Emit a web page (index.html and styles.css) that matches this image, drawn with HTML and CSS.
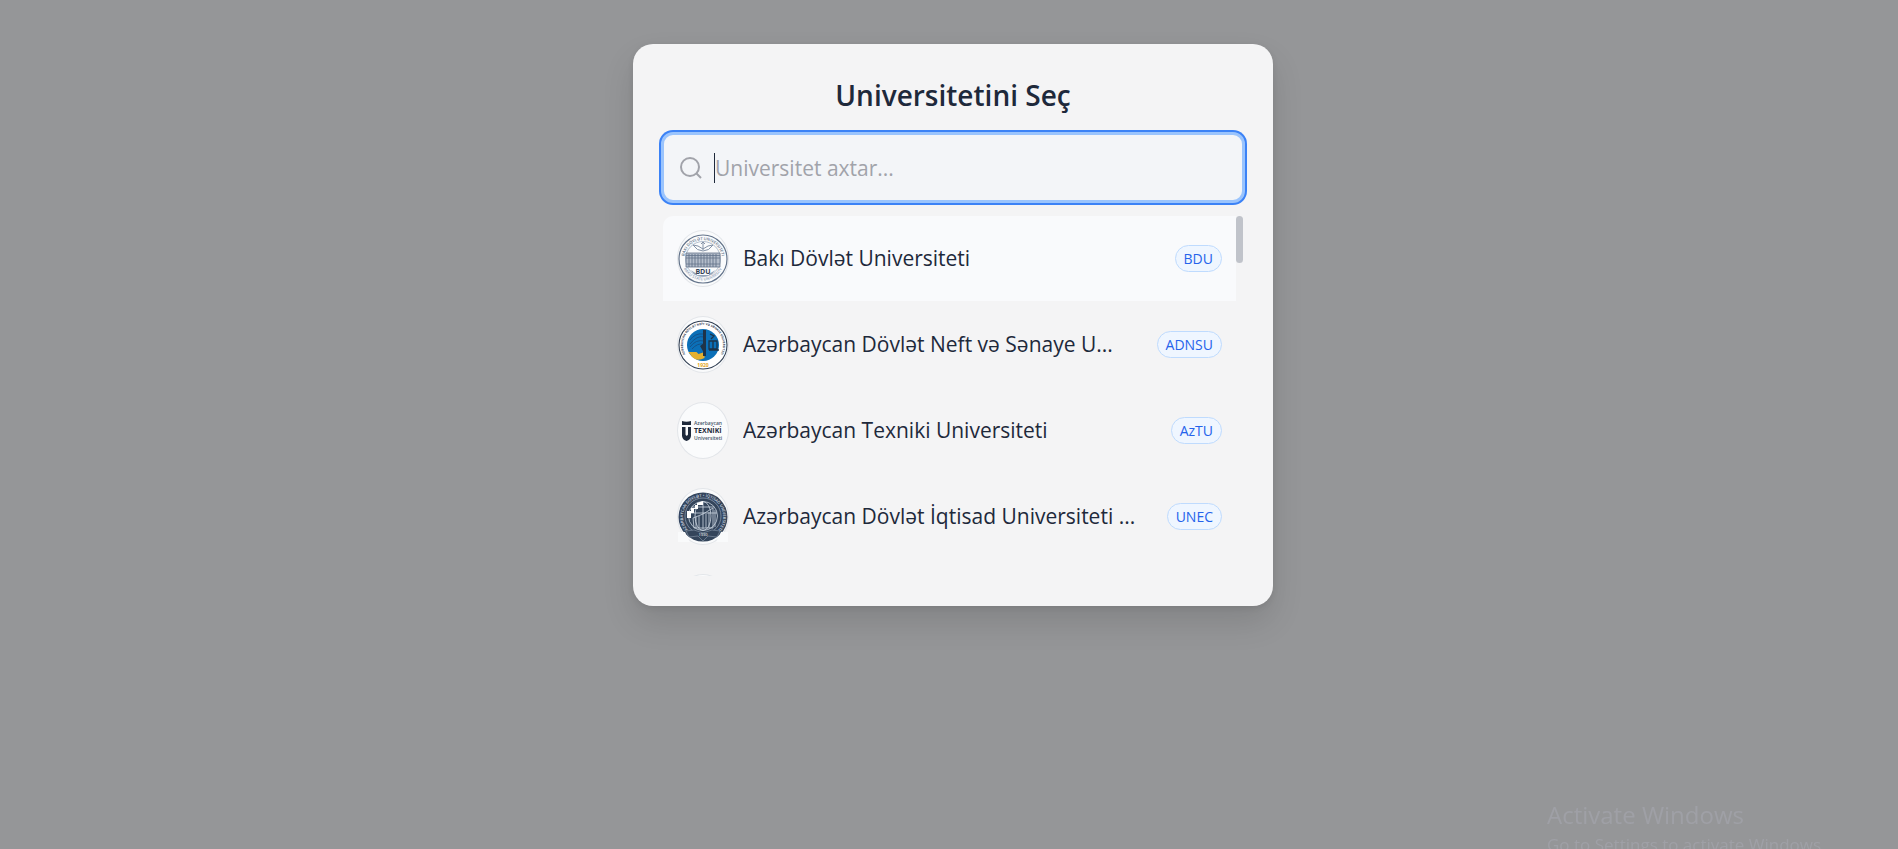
FILE: index.html
```html
<!DOCTYPE html>
<html lang="az">
<head>
    <meta charset="UTF-8">
    <meta name="viewport" content="width=device-width, initial-scale=1.0">
    <title>Universitetini Seç</title>
    <link rel="stylesheet" href="styles.css">
</head>
<body>

    <main class="modal">
        <h2 class="modal-title">Universitetini Seç</h2>

        <label class="search" for="search">
            <svg class="search-icon" viewBox="0 0 24 24" role="img" aria-label="Axtar">
                <circle cx="12" cy="11" r="9"/>
                <path d="M18.500 17.500 23 22"/>
            </svg>
            <span class="caret"></span>
            <input type="text" id="search" name="search" placeholder="Universitet axtar...">
        </label>

        <div class="list-wrap">
            <ul class="list">
                <li>
                    <button type="button" class="row active">
                        <span class="logo">
                            <svg viewBox="0 0 50 50">
                                <defs>
                                    <path id="bdu-top" d="M6 25a19 19 0 0 1 38 0"/>
                                    <path id="bdu-bottom" d="M3.500 25a21.500 21.500 0 0 0 43 0"/>
                                </defs>
                                <circle cx="25" cy="25" r="24" fill="#fafbfc" stroke="#64748b" stroke-width="1.200"/>
                                <circle cx="25" cy="25" r="17.500" fill="none" stroke="#94a3b8" stroke-width=".7"/>
                                <text class="seal-text slate"><textPath href="#bdu-top" startOffset="50%">BAKI DÖVLƏT UNIVERSITETI</textPath></text>
                                <text class="seal-text pale"><textPath href="#bdu-bottom" startOffset="50%">BAKU STATE UNIVERSITY</textPath></text>
                                <path d="M15 11q5 0 10 4 5-4 10-4-4 6-10 6t-10-6M25 8v8M23 10l2-2 2 2" fill="none" stroke="#8492a6"/>
                                <path d="M8 19h34v14H8z" fill="#b4bdca" stroke="#64748b" stroke-width=".8"/>
                                <path d="M8 21.500h34M8 24h34M8 30h34" stroke="#64748b" stroke-width=".8"/>
                                <path d="M11 20v13M14 20v13M17 20v13M20 20v13M23 20v13M26 20v13M29 20v13M32 20v13M35 20v13M38 20v13" stroke="#64748b" stroke-width=".9"/>
                                <path d="M13 36q12 10 24 0l-3 4q-9 5-18 0z" fill="#94a3b8"/>
                                <path d="M19 34h12v7H19z" fill="#fafbfc"/>
                                <text class="bdu-text" x="25" y="40">BDU</text>
                            </svg>
                        </span>
                        <span class="name">Bakı Dövlət Universiteti</span>
                        <span class="badge">BDU</span>
                    </button>
                </li>
                <li>
                    <button type="button" class="row">
                        <span class="logo">
                            <svg viewBox="0 0 50 50">
                                <defs>
                                    <path id="oil-ring" d="M13 41a20 20 0 1 1 24 0"/>
                                </defs>
                                <circle cx="25" cy="25" r="24" fill="#fff" stroke="#334155" stroke-width="1.100"/>
                                <text class="seal-text dark"><textPath href="#oil-ring" startOffset="50%">AZƏRBAYCAN DÖVLƏT NEFT VƏ SƏNAYE UNIVERSITETI</textPath></text>
                                <circle cx="25" cy="25" r="16" fill="#0b70b8"/>
                                <path d="M10.500 32h8l2 2 6-2v6q-9 5-14.500-4z" fill="#e3b02e"/>
                                <path d="M12 24q7-9 14-7M12 27q6-8 14-6M14 29q5-6 12-5M12 20q5-7 13-6" fill="none" stroke="#164e83" stroke-width=".9"/>
                                <path d="M25 10h3v26h-3zM22 26l4-3v10zM24 30l4 5" fill="#1e3348"/>
                                <path d="M32 14l4 2-3 3M31 21v8h8v-8zM35 21v8M31 30h10" fill="none" stroke="#1e3348" stroke-width="1.300"/>
                                <text class="year-gold" x="25" y="47">1920</text>
                            </svg>
                        </span>
                        <span class="name">Azərbaycan Dövlət Neft və Sənaye U...</span>
                        <span class="badge">ADNSU</span>
                    </button>
                </li>
                <li>
                    <button type="button" class="row">
                        <span class="logo">
                            <svg viewBox="0 0 50 50">
                                <path d="M4 15q4.500 1.500 9 0v4H4z" fill="#1e293b"/>
                                <path d="M4 21h3.500v7.500q1 2.500 2.500 0V21H13v9q-.5 4-4.500 5-4-1-4.500-5z" fill="#1e293b"/>
                                <text class="aztu-text" x="16" y="19">Azərbaycan</text>
                                <text class="aztu-bold" x="16" y="27">TEXNİKİ</text>
                                <text class="aztu-text" x="16" y="34">Universiteti</text>
                            </svg>
                        </span>
                        <span class="name">Azərbaycan Texniki Universiteti</span>
                        <span class="badge">AzTU</span>
                    </button>
                </li>
                <li>
                    <button type="button" class="row">
                        <span class="logo">
                            <svg viewBox="0 0 50 50">
                                <defs>
                                    <path id="unec-ring" d="M9.500 37.500a20 20 0 1 1 31 0"/>
                                </defs>
                                <circle cx="25" cy="25" r="24.500" fill="#34455b"/>
                                <path d="M0 40h7l5 10H0zM50 40h-7l-5 10h12z" fill="#f9fafb"/>
                                <circle cx="25" cy="24" r="18" fill="none" stroke="#94a3b8" stroke-width=".7"/>
                                <text class="seal-text light"><textPath href="#unec-ring" startOffset="50%">AZƏRBAYCAN DÖVLƏT • İQTİSAD UNİVERSİTETİ</textPath></text>
                                <g fill="none" stroke="#cbd5e1" stroke-width=".8">
                                    <circle cx="25" cy="24" r="14.500"/>
                                    <path d="M25 9.500v28M11 21h28M14 15h22"/>
                                    <ellipse cx="25" cy="24" rx="8" ry="14.500"/>
                                    <path d="M15 26l10-4 10-6v20H16zM18 25v11M21 24v12M28 22v14M31 20v16M37 18v17"/>
                                </g>
                                <path d="M9 19h4v-3h4v-3h3v4h-4v4h-3v5H9zM19 11l6-2v4h-6z" fill="#fff"/>
                                <path d="M8 39l8-1 9 3 9-3 8 1-3 6-9-1-5 5-5-5-9 1z" fill="#34455b" stroke="#8c9aad" stroke-width=".6"/>
                                <text class="year-light" x="25" y="44">1930</text>
                            </svg>
                        </span>
                        <span class="name">Azərbaycan Dövlət İqtisad Universiteti ...</span>
                        <span class="badge">UNEC</span>
                    </button>
                </li>
                <li>
                    <button type="button" class="row">
                        <span class="logo"></span>
                    </button>
                </li>
            </ul>
            <div class="scrollbar"></div>
        </div>
    </main>

    <aside class="watermark">
        <p class="watermark-title">Activate Windows</p>
        <p class="watermark-text">Go to Settings to activate Windows.</p>
    </aside>

</body>
</html>
```
FILE: styles.css
```css
* {
    box-sizing: border-box;
}
body {
    margin: 0;
    height: 100vh;
    overflow: hidden;
    padding: 44px 12px 44px 20px;
    font-family: "Segoe UI", "Open Sans", "Noto Sans", sans-serif;
    background-color: #959698;
    color: #1e293b;
}
.modal {
    max-width: 640px;
    margin: 0 auto;
    padding: 28px 28px 30px;
    background: #f4f4f5;
    border-radius: 20px;
    box-shadow: 0 16px 32px rgba(0, 0, 0, 0.12), 0 2px 6px rgba(0, 0, 0, 0.08);
}
.modal-title {
    margin: 0 0 14px;
    font-size: 28px;
    line-height: 46px;
    font-weight: 600;
    text-align: center;
}
.search {
    display: flex;
    align-items: center;
    height: 71px;
    padding: 0 14px;
    background: #f3f5f8;
    border: 3px solid #9ac4fd;
    border-radius: 12px;
    box-shadow: 0 0 0 2px #3b82f6;
    cursor: text;
}
.search-icon {
    width: 24px;
    height: 24px;
    margin-right: 12px;
    fill: none;
    stroke: #a1a3aa;
    stroke-width: 2;
}
.caret {
    width: 1px;
    height: 30px;
    background: #1e293b;
}
.search input {
    flex: 1;
    min-width: 0;
    height: 30px;
    padding: 0;
    border: none;
    outline: none;
    background: transparent;
    font-family: inherit;
    font-size: 21px;
    color: #1e293b;
}
.search input::placeholder {
    color: #a1a3aa;
    opacity: 1;
}
.list-wrap {
    display: flex;
    align-items: flex-start;
    height: 360px;
    margin: 13px 2px 0;
}
.list {
    flex: 1;
    min-width: 0;
    height: 100%;
    margin: 0;
    padding: 0;
    list-style: none;
    overflow-y: auto;
    scrollbar-width: none;
    border-radius: 10px 0 0 0;
}
.scrollbar {
    width: 7px;
    height: 47px;
    border-radius: 4px;
    background: #c0c3ca;
}
.row {
    display: flex;
    align-items: center;
    gap: 14px;
    width: 100%;
    height: 85px;
    margin-bottom: 1px;
    padding: 14px;
    border: none;
    background: transparent;
    font-family: inherit;
    font-size: 21px;
    color: inherit;
    text-align: left;
    cursor: pointer;
}
.row.active {
    background: #f9fafc;
}
.logo {
    display: flex;
    align-items: center;
    flex-shrink: 0;
    width: 52px;
    height: 57px;
    border: 1px solid #e2e5e9;
    border-radius: 50%;
    background: #fafbfc;
}
.logo svg {
    width: 50px;
    height: 50px;
}
.name {
    flex: 1;
    min-width: 0;
    padding-bottom: 2px;
    overflow: hidden;
    white-space: nowrap;
    text-overflow: ellipsis;
}
.badge {
    padding: 0 8px;
    border: 1px solid #bfdbfe;
    border-radius: 14px;
    background: #eff6ff;
    color: #2563eb;
    font-size: 14px;
    line-height: 25px;
}

/* lettering inside the logos */
.seal-text {
    font-size: 4px;
    font-weight: 600;
    text-anchor: middle;
}
.slate {
    fill: #64748b;
}
.pale {
    fill: #94a3b8;
}
.dark {
    font-size: 3px;
    font-weight: 700;
    fill: #334155;
}
.light {
    fill: #cbd5e1;
}
.bdu-text {
    font-size: 7px;
    font-weight: 700;
    text-anchor: middle;
    fill: #334155;
}
.year-gold {
    font-size: 5px;
    font-weight: 700;
    text-anchor: middle;
    fill: #e3a61e;
}
.year-light {
    font-size: 4px;
    text-anchor: middle;
    fill: #fff;
}
.aztu-text {
    font-size: 5px;
    font-weight: 600;
    fill: #475569;
}
.aztu-bold {
    font-size: 7px;
    font-weight: 700;
    fill: #1e293b;
}

.watermark {
    position: fixed;
    right: 70px;
    bottom: -8px;
    width: 281px;
    color: #9fa0a6;
}
.watermark p {
    margin: 0;
    white-space: nowrap;
}
.watermark-title {
    font-size: 24px;
    line-height: 36px;
}
.watermark-text {
    font-size: 17px;
    line-height: 24px;
}
```
